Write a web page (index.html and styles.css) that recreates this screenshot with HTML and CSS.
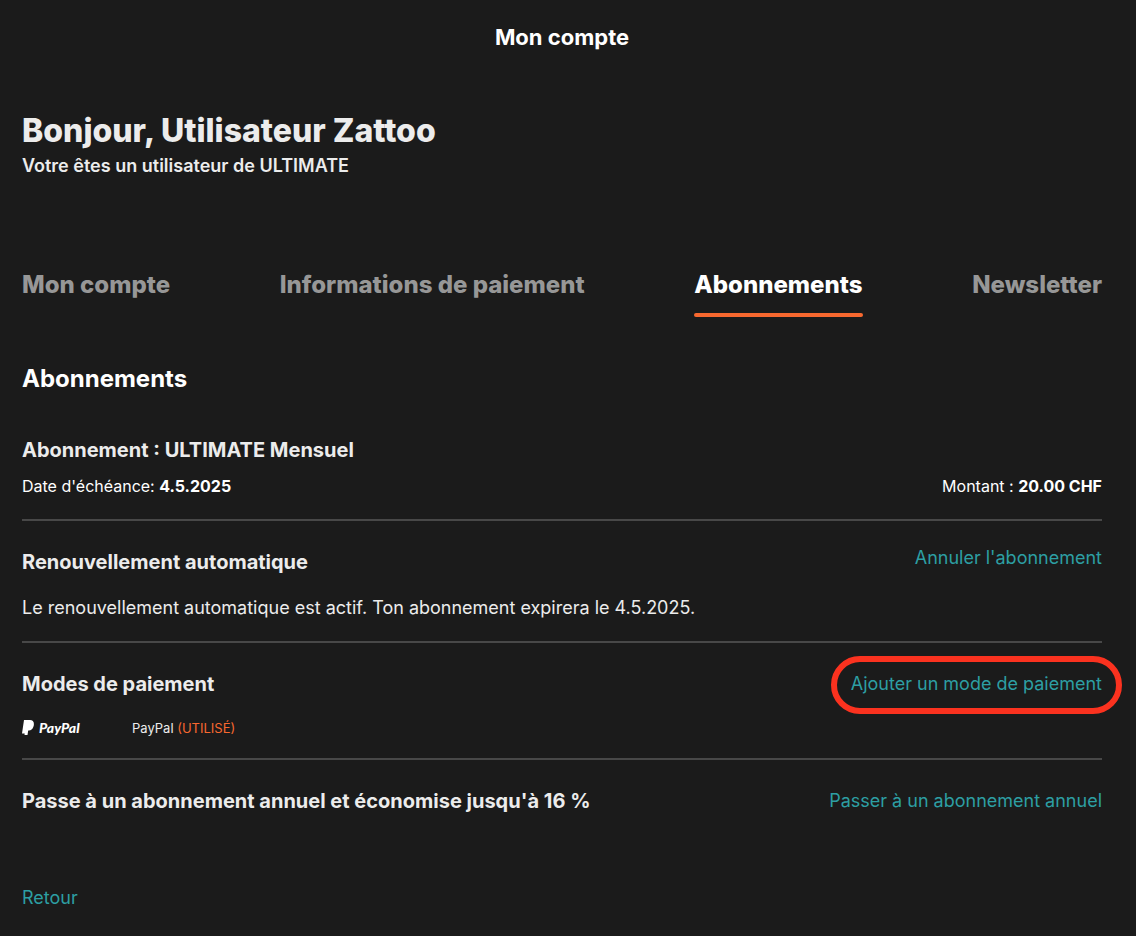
FILE: index.html
```html
<!DOCTYPE html>
<html lang="fr">
<head>
    <meta charset="UTF-8">
    <meta name="viewport" content="width=device-width, initial-scale=1.0">
    <title>Mon compte</title>
    <link rel="stylesheet" href="styles.css">
</head>
<body>
    <header class="top-bar">Mon compte</header>

    <main>
        <div class="greeting">
            <h1>Bonjour, Utilisateur Zattoo</h1>
            <p>Votre êtes un utilisateur de ULTIMATE</p>
        </div>

        <nav class="tabs">
            <a href="#compte">Mon compte</a>
            <a href="#paiement">Informations de paiement</a>
            <a href="#abonnements" class="active">Abonnements</a>
            <a href="#newsletter">Newsletter</a>
        </nav>

        <h2>Abonnements</h2>

        <section class="block first">
            <h3>Abonnement : ULTIMATE Mensuel</h3>
            <div class="row details">
                <span>Date d'échéance: <b>4.5.2025</b></span>
                <span>Montant : <b>20.00 CHF</b></span>
            </div>
        </section>

        <section class="block">
            <div class="row row-top">
                <h3>Renouvellement automatique</h3>
                <a href="#annuler" class="action">Annuler l'abonnement</a>
            </div>
            <p class="text">Le renouvellement automatique est actif. Ton abonnement expirera le 4.5.2025.</p>
        </section>

        <section class="block">
            <div class="row">
                <h3>Modes de paiement</h3>
                <a href="#ajouter" class="action highlighted">Ajouter un mode de paiement</a>
            </div>
            <div class="method">
                <span class="paypal">
                    <svg width="12" height="16" viewBox="0 0 12 16" aria-hidden="true">
                        <path fill="#fff" d="M2 0H8C10.400 0 12 1.500 11.900 4C11.900 5 11.800 6 11.300 7C10.500 9.300 9 10.500 6.900 10.500H6.200L5.500 15H2.500L2.700 13.500H0Z"/>
                    </svg>
                    <i>PayPal</i>
                </span>
                <span>PayPal <span class="used">(UTILISÉ)</span></span>
            </div>
        </section>

        <section class="block last">
            <div class="row">
                <h3>Passe à un abonnement annuel et économise jusqu'à 16 %</h3>
                <a href="#annuel" class="action">Passer à un abonnement annuel</a>
            </div>
        </section>

        <a href="#retour" class="action back">Retour</a>
    </main>
</body>
</html>
```

FILE: styles.css
```css
body {
    margin: 0;
    padding: 0 34px 0 22px;
    font-family: Inter, 'Liberation Sans', sans-serif;
    background-color: #1b1b1b;
    color: #ececec;
}

h1, h2, h3, p {
    margin: 0;
}

a {
    text-decoration: none;
}

.top-bar {
    padding: 25px 0;
    font-size: 22px;
    line-height: 24px;
    font-weight: bold;
    text-align: center;
    color: #fff;
}

.greeting {
    padding-top: 37px;
}

h1 {
    font-size: 32px;
    line-height: 40px;
    font-weight: 800;
}

.greeting p {
    font-size: 18px;
    line-height: 30px;
    font-weight: 600;
}

.tabs {
    display: flex;
    justify-content: space-between;
    margin-top: 88px;
}

.tabs a {
    position: relative;
    padding-bottom: 16px;
    font-size: 24px;
    line-height: 32px;
    font-weight: 800;
    color: #979797;
}

.tabs .active {
    color: #fff;
}

.tabs .active::after {
    content: '';
    position: absolute;
    left: 0;
    right: 0;
    bottom: 0;
    height: 4px;
    border-radius: 2px;
    background-color: #f8682f;
}

h2 {
    margin-top: 46px;
    font-size: 24px;
    line-height: 32px;
    color: #fff;
}

h3 {
    font-size: 20px;
    line-height: 28px;
}

.block {
    padding: 27px 0 21px;
    border-bottom: 2px solid #484848;
}

.first {
    padding-top: 41px;
}

.last {
    border-bottom: none;
}

.row {
    display: flex;
    justify-content: space-between;
    align-items: center;
}

.row-top {
    align-items: flex-start;
}

.details {
    padding-top: 10px;
    font-size: 16px;
    line-height: 24px;
    color: #fff;
}

.action {
    font-size: 18px;
    line-height: 24px;
    color: #2d9fa3;
}

.row-top .action {
    line-height: 20px;
}

.text {
    padding-top: 20px;
    font-size: 18px;
    line-height: 24px;
}

.highlighted {
    position: relative;
}

/* red marker drawn around the link */
.highlighted::after {
    content: '';
    position: absolute;
    inset: -16px -20px -18px -20px;
    border: 6px solid #fb321f;
    border-radius: 29px;
    pointer-events: none;
}

.method {
    display: flex;
    align-items: center;
    padding-top: 21px;
    font-size: 13px;
    line-height: 18px;
}

.paypal {
    display: flex;
    align-items: center;
    gap: 5px;
    width: 110px;
    font-family: Lato, sans-serif;
    font-size: 14px;
    font-weight: 900;
    color: #fff;
}

.used {
    color: #f8682f;
}

.back {
    display: inline-block;
    margin-top: 50px;
    margin-bottom: 24px;
}
```
